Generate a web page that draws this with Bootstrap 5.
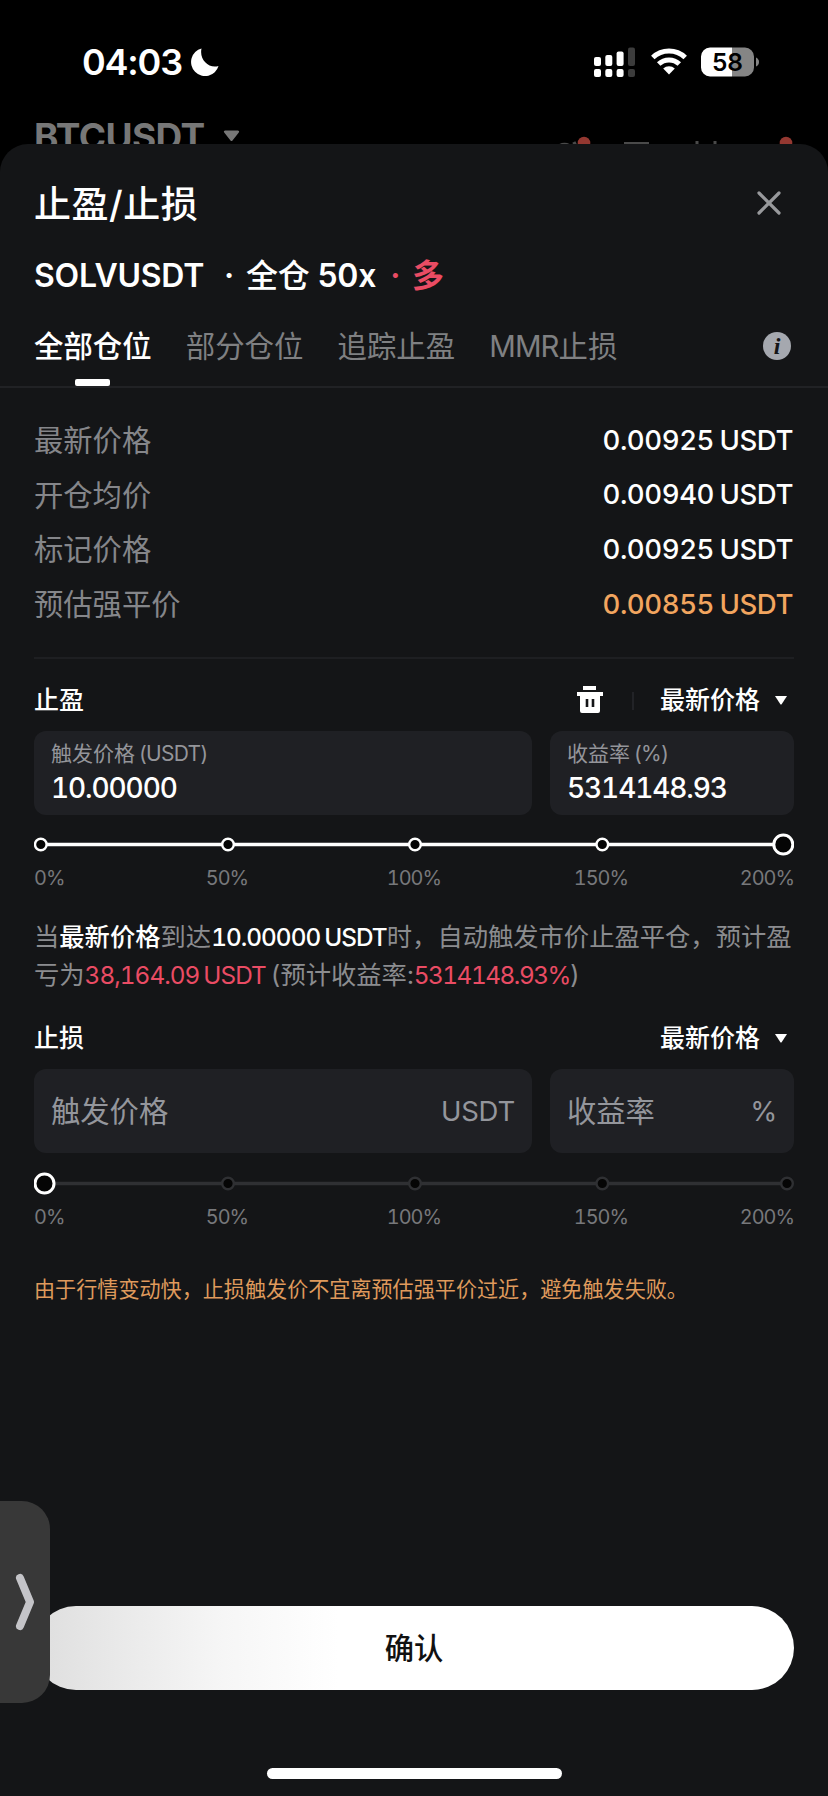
<!DOCTYPE html>
<html lang="zh-CN">
<head>
<meta charset="utf-8">
<meta name="viewport" content="width=device-width, initial-scale=1">
<title>止盈/止损</title>
<link href="https://cdn.jsdelivr.net/npm/bootstrap@5.3.0/dist/css/bootstrap.min.css" rel="stylesheet">
<style>
  body{background:#000;color:#fff;font-family:Inter,"Noto Sans CJK SC",sans-serif;font-feature-settings:"tnum";font-weight:500;height:1796px;overflow:hidden;line-height:1}
  svg{display:block;flex:none}
  .status{height:108px;padding:16px 68px 0 82px}
  .clock{font-size:36px;font-weight:600;font-feature-settings:normal;letter-spacing:-1.200px}
  .behind{height:36px;overflow:hidden;color:#777;padding-left:34px}
  .pair{font-size:37px;font-weight:700;line-height:58px;letter-spacing:-.6px}
  .sheet{background:#141517;border-radius:28px 28px 0 0;height:1652px}
  .side{padding-left:34px;padding-right:34px}
  .cjk-b{font-weight:500}
  .heading{height:120px;font-size:37px}
  .heading .cjk-b{letter-spacing:.5px}
  .symbol{height:24px;font-size:32px;font-weight:600;font-feature-settings:normal;white-space:pre;letter-spacing:-.25px}
  .rose{color:#ea4c64}
  .tabs{height:100px;border-bottom:2px solid #212225;font-size:29.4px;font-weight:400;gap:34.2px;color:#7f8082}
  .tabs .tab{height:100%;line-height:117px;white-space:nowrap}
  .tabs .current{color:#fff;font-weight:500}
  .tabs .current::after{content:"";position:absolute;left:41px;bottom:0;width:35px;height:7px;border-radius:2px;background:#fff}
  .quotes{padding-top:25px;height:271px;border-bottom:2px solid #1e1f22;margin:0 34px}
  .quote{height:54.8px;font-size:29.3px;color:#85868a;font-weight:400}
  .quote b{font-weight:500;font-size:27.6px;color:#fff;letter-spacing:-.45px;word-spacing:-1.5px;padding-right:1px}
  .quote .amber{color:#f2a55f}
  .group-head{height:72px;font-size:25px;padding-top:11px}
  .field{background:#1f2024;border-radius:12px;height:84px;padding:0 17px}
  .field-l{width:498px}
  .field-r{width:244px}
  .cap{font-size:21px;color:#94959a;font-weight:400;line-height:30px}
  .cap i{font-style:normal;letter-spacing:-.75px;margin-left:-2px}
  .num{font-size:28px;line-height:38px;letter-spacing:-1.1px}
  .hint{font-size:29.3px;color:#94969c;font-weight:400;padding-top:2px}
  .unit{font-size:27.5px;letter-spacing:-.2px}
  .ticks{font-size:19.9px;color:#77787b;font-weight:400;height:24px;letter-spacing:-1px}
  .ticks span{width:187.2px;text-align:center}
  .ticks span:first-child{width:99.5px;text-align:left}
  .ticks span:last-child{width:99.7px;text-align:right}
  .summary{font-size:25.3px;line-height:38px;color:#8b8c8f;font-weight:400;white-space:nowrap;margin-top:27px;height:76px}
  .summary b{font-weight:500;color:#fff}
  .summary .lat{font-size:24.3px;letter-spacing:-.95px;word-spacing:-1.6px}
  .summary .pct{letter-spacing:-1.45px}
  .note{font-size:21.1px;color:#df9a5c;font-weight:400;margin-top:48px;height:24px;line-height:24px}
  .ok{height:84px;border:0;border-radius:42px;font-size:29.3px;font-weight:500;color:#111;background:linear-gradient(90deg,#dedede,#ececec 14%,#f6f6f6 25%,#fff 40%);line-height:1;padding-top:8px}
  .home{width:295px;height:11px;border-radius:6px;background:#fff}
  .drawer{left:0;top:1501px;width:50px;height:202px;border-radius:0 28px 28px 0;background:#383838}
</style>
</head>
<body class="position-relative">
<header class="status d-flex align-items-center">
  <span class="clock">04:03</span>
  <svg style="margin-left:8px" width="30" height="30" viewBox="0 0 30 30"><path d="M11.500 1.500A14 14 0 1 0 28.500 19C19 22 9 13 11.500 1.500Z" fill="#fff"/></svg>
  <svg class="ms-auto" width="42" height="30" viewBox="0 0 42 30"><g fill="#fff"><rect x="0" y="10" width="7" height="9" rx="2"/><rect x="11.300" y="8" width="7" height="11" rx="2"/><rect x="22.600" y="4.500" width="7" height="14.500" rx="2"/><rect x="0" y="22" width="7" height="8" rx="2"/><rect x="11.300" y="22" width="7" height="8" rx="2"/><rect x="22.600" y="22" width="7" height="8" rx="2"/></g><g fill="#3c3c3c"><rect x="34" y="0.500" width="7" height="18.500" rx="2"/><rect x="34" y="22" width="7" height="8" rx="2"/></g></svg>
  <svg style="margin-left:15px" width="36" height="28" viewBox="0 0 36 28"><g fill="none" stroke="#fff" stroke-width="5"><path d="M1.800 9.500A23.500 23.500 0 0 1 34.200 9.500"/><path d="M7.700 16A15 15 0 0 1 28.300 16"/></g><path d="M12.200 20.500A8.500 8.500 0 0 1 23.800 20.500L18 26.500Z" fill="#fff"/></svg>
  <svg style="margin-left:14px" width="59" height="30" viewBox="0 0 59 30"><path d="M9 .5H31V29.500H9A9 9 0 0 1 0 20.500V9.500A9 9 0 0 1 9 .5Z" fill="#fff"/><path d="M31 .5H44A9 9 0 0 1 53 9.500V20.500A9 9 0 0 1 44 29.500H31Z" fill="#858585"/><path d="M55 10.500Q58 12 58 15T55 19.500Z" fill="#858585"/><text x="26.500" y="23.800" font-size="24.500" font-weight="600" text-anchor="middle" fill="#000" style="font-feature-settings:normal">58</text></svg>
</header>
<div class="behind d-flex">
  <span class="pair">BTCUSDT</span>
  <svg style="margin:22px 0 0 18px" width="17" height="12" viewBox="0 0 17 12"><path d="M2 .5H15Q17 1 15.800 2.500L9.500 10.500Q8.500 11.500 7.500 10.500L1.200 2.500Q0 1 2 .5Z" fill="#777"/></svg>
  <svg class="ms-auto" style="margin-right:30px" width="240" height="36" viewBox="0 0 240 36"><g fill="none" stroke="#4a4a4a" stroke-width="3"><path d="M1 38A8 6 0 0 1 12 38M15 36L18 34.500M66 35.500H91M139 33V36M157 33V36"/></g><g fill="#943831"><circle cx="26" cy="35" r="6.300"/><circle cx="228" cy="35" r="6.300"/></g></svg>
</div>
<main class="sheet">
  <div class="heading side d-flex align-items-center justify-content-between">
    <span class="cjk-b">止盈/止损</span>
    <svg style="margin:-2px 13px 0 0" width="24" height="24" viewBox="0 0 24 24"><path d="M2 2L22 22M22 2L2 22" stroke="#98999c" stroke-width="3.200" stroke-linecap="round"/></svg>
  </div>
  <div class="symbol side d-flex align-items-center"><span>SOLVUSDT</span><span style="margin-left:20px">·</span><span class="cjk-b" style="margin-left:12px">全仓</span><span class="ms-2">50x</span><span class="rose" style="margin-left:14px">·</span><span class="rose" style="margin-left:12px">多</span></div>
  <nav class="tabs side d-flex align-items-start">
    <span class="tab current position-relative">全部仓位</span><span class="tab">部分仓位</span><span class="tab">追踪止盈</span><span class="tab"><span style="letter-spacing:-.9px">MMR</span>止损</span>
    <svg class="ms-auto" style="margin-top:44px;margin-right:3px" width="28" height="28" viewBox="0 0 28 28"><circle cx="14" cy="14" r="14" fill="#a5a8af"/><text x="14" y="22" text-anchor="middle" font-family="Liberation Serif" font-size="24" font-weight="700" font-style="italic" fill="#141517">i</text></svg>
  </nav>
  <section class="quotes">
    <div class="quote d-flex align-items-center justify-content-between"><span>最新价格</span><b>0.00925 USDT</b></div>
    <div class="quote d-flex align-items-center justify-content-between"><span>开仓均价</span><b>0.00940 USDT</b></div>
    <div class="quote d-flex align-items-center justify-content-between"><span>标记价格</span><b>0.00925 USDT</b></div>
    <div class="quote d-flex align-items-center justify-content-between"><span>预估强平价</span><b class="amber">0.00855 USDT</b></div>
  </section>
  <section class="side">
    <div class="group-head d-flex align-items-center">
      <span class="cjk-b">止盈</span>
      <svg class="ms-auto" style="margin-top:-2px" width="26" height="27" viewBox="0 0 26 27"><path d="M6 0H19V4H6ZM0 6H26V10H23V25Q23 27 21 27H5Q3 27 3 25V10H0Z" fill="#fff"/><path d="M10 13V21M16 13V21" stroke="#141517" stroke-width="2.600"/></svg>
      <i style="margin:0 26px 0 29px;width:2px;height:18px;background:#222327"></i>
      <span class="cjk-b">最新价格</span>
      <svg style="margin:0 7px 0 15px" width="12" height="9" viewBox="0 0 12 9"><path d="M0 0H12L6.800 8Q6 9 5.200 8Z" fill="#fff"/></svg>
    </div>
    <div class="d-flex justify-content-between">
      <div class="field field-l d-flex flex-column justify-content-center"><span class="cap">触发价格 <i>(USDT)</i></span><span class="num">10.00000</span></div>
      <div class="field field-r d-flex flex-column justify-content-center"><span class="cap">收益率 <i>(%)</i></span><span class="num">5314148.93</span></div>
    </div>
    <svg style="margin-top:17px" width="760" height="24" viewBox="0 0 760 24"><path d="M7 12.500H750" stroke="#fff" stroke-width="3.500"/><g fill="#050505" stroke="#fff" stroke-width="2.400"><circle cx="6.800" cy="12.500" r="5.800"/><circle cx="194" cy="12.500" r="5.800"/><circle cx="381" cy="12.500" r="5.800"/><circle cx="568.300" cy="12.500" r="5.800"/><circle cx="749.300" cy="12.500" r="9.500" stroke-width="3"/></g></svg>
    <div class="ticks d-flex align-items-center" style="margin-top:11px"><span>0%</span><span>50%</span><span>100%</span><span>150%</span><span>200%</span></div>
    <div class="summary">当<b>最新价格</b>到达<b class="lat">10.00000 USDT</b>时，自动触发市价止盈平仓，预计盈<br>亏为<span class="rose lat">38,164.09 USDT</span><span style="word-spacing:-2px"> (</span>预计收益率:<span class="rose lat pct">5314148.93%</span>)</div>
    <div class="group-head d-flex align-items-center justify-content-between" style="margin-top:3px">
      <span class="cjk-b">止损</span>
      <span class="d-flex align-items-center"><span class="cjk-b">最新价格</span><svg style="margin:0 7px 0 15px" width="12" height="9" viewBox="0 0 12 9"><path d="M0 0H12L6.800 8Q6 9 5.200 8Z" fill="#fff"/></svg></span>
    </div>
    <div class="d-flex justify-content-between">
      <div class="field field-l hint d-flex align-items-center justify-content-between"><span>触发价格</span><span class="unit">USDT</span></div>
      <div class="field field-r hint d-flex align-items-center justify-content-between"><span>收益率</span><span class="unit">%</span></div>
    </div>
    <svg style="margin-top:18px" width="760" height="24" viewBox="0 0 760 24"><path d="M10 12.500H753" stroke="#2f3033" stroke-width="3.500"/><g fill="#050505" stroke="#2f3033" stroke-width="2.400"><circle cx="194" cy="12.500" r="5.800"/><circle cx="381" cy="12.500" r="5.800"/><circle cx="568.300" cy="12.500" r="5.800"/><circle cx="753" cy="12.500" r="5.800"/><circle cx="10.500" cy="12.500" r="9.500" stroke="#fff" stroke-width="3"/></g></svg>
    <div class="ticks d-flex align-items-center" style="margin-top:11px"><span>0%</span><span>50%</span><span>100%</span><span>150%</span><span>200%</span></div>
    <div class="note">由于行情变动快，止损触发价不宜离预估强平价过近，避免触发失败。</div>
    <button class="ok btn w-100 d-block" type="button" style="margin-top:304px">确认</button>
    <div class="home mx-auto" style="margin-top:78px"></div>
  </section>
</main>
<aside class="drawer position-absolute d-flex align-items-center">
  <svg style="margin-left:15px" width="20" height="60" viewBox="0 0 20 60"><path d="M5 6L15 30L5 54" fill="none" stroke="#c4c4c8" stroke-width="8" stroke-linecap="round" stroke-linejoin="round"/></svg>
</aside>
<script src="https://cdn.jsdelivr.net/npm/bootstrap@5.3.0/dist/js/bootstrap.bundle.min.js"></script>
</body>
</html>
